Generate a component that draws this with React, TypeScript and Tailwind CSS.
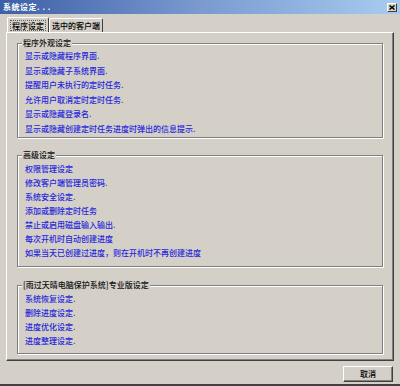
import type { ReactNode } from "react";

const look = [
  "显示或隐藏程序界面.",
  "显示或隐藏子系统界面.",
  "提醒用户未执行的定时任务.",
  "允许用户取消定时定时任务.",
  "显示或隐藏登录名.",
  "显示或隐藏创建定时任务进度时弹出的信息提示.",
];

const advanced = [
  "权限管理设定",
  "修改客户端管理员密码.",
  "系统安全设定.",
  "添加或删除定时任务",
  "禁止或启用磁盘输入输出.",
  "每次开机时自动创建进度",
  "如果当天已创建过进度，则在开机时不再创建进度",
];

const pro = ["系统恢复设定.", "删除进度设定.", "进度优化设定.", "进度整理设定."];

function Group({
  title,
  className,
  children,
}: {
  title: string;
  className: string;
  children: ReactNode;
}) {
  return (
    <fieldset
      className={
        "mx-[10px] min-w-0 border border-[#808080] p-0 shadow-[inset_1px_1px_0_#ffffff,1px_1px_0_#ffffff] " +
        className
      }
    >
      <legend className="ml-[4px] bg-[#d4d0c8] px-[1px] text-[8px] font-medium leading-[10px] text-[#111]">
        {title}
      </legend>
      {children}
    </fieldset>
  );
}

function Links({ items, className }: { items: string[]; className: string }) {
  return (
    <ul className={"flex flex-col pl-[7px] " + className}>
      {items.map((t) => (
        <li key={t} className="cursor-pointer whitespace-nowrap text-[8px] font-medium text-[#2626dc]">
          {t}
        </li>
      ))}
    </ul>
  );
}

export default function App() {
  return (
    <div
      className="flex h-[386px] w-[400px] flex-col overflow-hidden border-b-2 border-b-[#404040] bg-[#d4d0c8]"
      style={{ fontFamily: '"Noto Sans CJK SC", "Noto Sans", sans-serif' }}
    >
      {/* title bar */}
      <div className="flex h-[14px] items-center justify-between bg-gradient-to-r from-[#3d5fa6] via-[#7a9ad0] to-[#a8ccf0] pl-[3px] pr-[3px]">
        <span className="text-[8px] font-bold leading-none tracking-[0.5px] text-white">
          系统设定. . .
        </span>
        <button className="flex h-[9px] w-[10px] items-center justify-center border border-t-white border-l-white border-r-[#404040] border-b-[#404040] bg-[#d4d0c8]">
          <svg width="6" height="5" viewBox="0 0 6 5">
            <path d="M0.5 0.5 L5.5 4.5 M5.5 0.5 L0.5 4.5" stroke="#000" strokeWidth="1.4" />
          </svg>
        </button>
      </div>

      {/* tabs */}
      <div className="mt-[3px] flex items-end pl-[7px]">
        <div className="flex h-[15px] w-[42px] items-center justify-center rounded-t-[2px] border border-b-0 border-t-white border-l-white border-r-[#404040] bg-[#d4d0c8]">
          <span className="border border-dotted border-[#606060] px-[1px] text-[8px] font-medium leading-[9px] text-black">
            程序设定
          </span>
        </div>
        <div className="flex h-[14px] w-[54px] items-center justify-center rounded-t-[2px] border border-b-0 border-t-white border-l-white border-r-[#404040] bg-[#d4d0c8] text-[8px] font-medium text-black">
          选中的客户端
        </div>
      </div>

      {/* tab panel */}
      <div className="ml-[6px] flex h-[329px] w-[388px] flex-col border border-t-white border-l-white border-r-[#404040] border-b-[#404040] shadow-[inset_-1px_-1px_0_#808080] pt-[5px]">
        <Group title="程序外观设定" className="h-[100px]">
          <Links items={look} className="pt-[1px] leading-[14.6px]" />
        </Group>
        <Group title="高级设定" className="mt-[12px] h-[117px]">
          <Links items={advanced} className="pt-[2px] leading-[14px]" />
        </Group>
        <Group title="[雨过天晴电脑保护系统]专业版设定" className="mt-[13px] h-[74px]">
          <Links items={pro} className="pt-[2px] leading-[14px]" />
        </Group>
      </div>

      {/* footer */}
      <div className="mt-[5px] flex justify-end pr-[7px]">
        <button className="h-[16px] w-[50px] border border-t-white border-l-white border-r-[#404040] border-b-[#404040] bg-[#d4d0c8] text-[8px] font-medium leading-none text-black shadow-[inset_-1px_-1px_0_#808080]">
          取消
        </button>
      </div>
    </div>
  );
}
